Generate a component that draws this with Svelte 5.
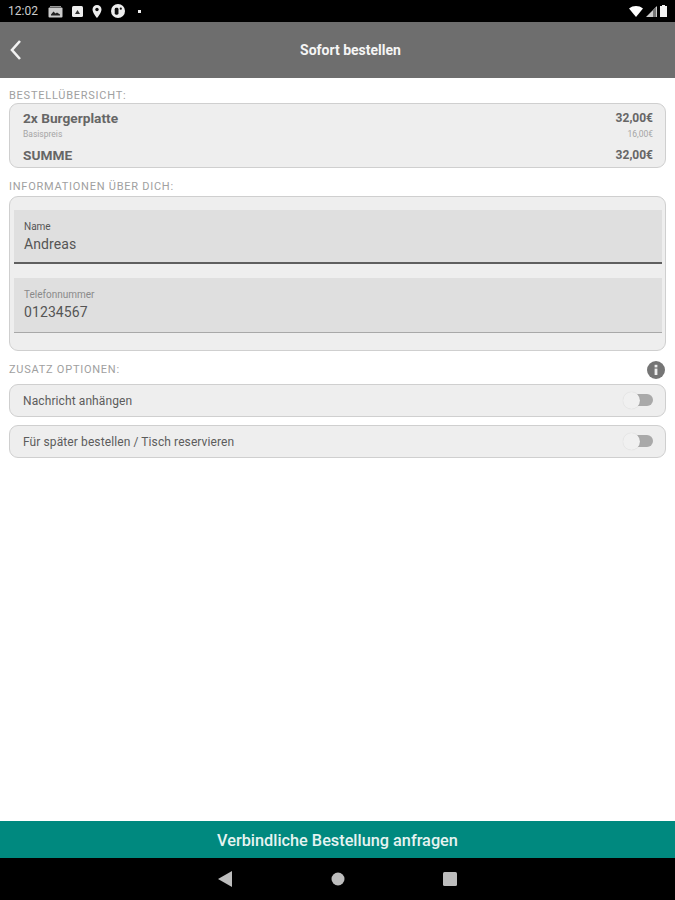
<script>
	const lines = [
		{ name: '2x Burgerplatte', price: '32,00€', cls: 'item' },
		{ name: 'Basispreis', price: '16,00€', cls: 'sub' },
		{ name: 'SUMME', price: '32,00€', cls: 'sum' }
	];
	const options = ['Nachricht anhängen', 'Für später bestellen / Tisch reservieren'];
</script>

<div class="page">
	<div class="statusbar">
		<span class="time">12:02</span>
		<div class="status-left">
			<svg width="15" height="13" viewBox="0 0 15 13"><path d="M2 1h11v1H2z" fill="#999" /><rect x="0.500" y="2.500" width="14" height="10" rx="1" fill="#ccc" /><path d="M3 9.500l2.500-3 2 2 1.500-1 3 2v1H3z" fill="#222" /></svg>
			<svg width="11" height="11" viewBox="0 0 11 11"><rect width="11" height="11" rx="1.500" fill="#eee" /><path d="M3 8l2.500-4L8 8z" fill="#333" /></svg>
			<svg width="10" height="13" viewBox="0 0 10 13"><path d="M5 0a4.500 4.500 0 0 0-4.500 4.500C.5 8 5 13 5 13s4.500-5 4.500-8.500A4.500 4.500 0 0 0 5 0z" fill="#eee" /><circle cx="5" cy="4.500" r="1.700" fill="#111" /></svg>
			<svg width="14" height="14" viewBox="0 0 15 15"><circle cx="7.500" cy="7.500" r="7.500" fill="#eee" /><rect x="4" y="4" width="4" height="7.500" rx="1.500" fill="#111" /><circle cx="10.500" cy="5" r="1.200" fill="#111" /></svg>
			<span class="dot"></span>
		</div>
		<div class="status-right">
			<svg width="14" height="11" viewBox="0 0 14 11"><path d="M0 2.500C4-.8 10-.8 14 2.500L7 11z" fill="#fff" /></svg>
			<svg width="11" height="11" viewBox="0 0 11 11"><path d="M11 0v11H0z" fill="#ccc" /><path d="M7 4v7h3V1z" fill="#777" /></svg>
			<svg width="7" height="12" viewBox="0 0 7 12"><path d="M2 1V0h3v1h2v11H0V1z" fill="#f2f2f2" /></svg>
		</div>
	</div>

	<header class="appbar">
		<svg class="back" width="13" height="22" viewBox="0 0 13 22"><path d="M11 2L3 11l8 9" fill="none" stroke="#f2f2f2" stroke-width="2.600" /></svg>
		<h1>Sofort bestellen</h1>
	</header>

	<main class="content">
		<div class="section-label first">BESTELLÜBERSICHT:</div>
		<section class="card summary">
			{#each lines as line}
				<div class="line {line.cls}">
					<span>{line.name}</span>
					<span>{line.price}</span>
				</div>
			{/each}
		</section>

		<div class="section-label">INFORMATIONEN ÜBER DICH:</div>
		<section class="card form">
			<div class="field active">
				<span class="field-label">Name</span>
				<span class="field-value">Andreas</span>
			</div>
			<div class="field">
				<span class="field-label muted">Telefonnummer</span>
				<span class="field-value">01234567</span>
			</div>
		</section>

		<div class="section-label with-icon">
			<span>ZUSATZ OPTIONEN:</span>
			<svg class="info" width="18" height="18" viewBox="0 0 18 18"><circle cx="9" cy="9" r="9" fill="#757575" /><rect x="7.600" y="3.800" width="2.800" height="2.600" fill="#eee" /><rect x="7.600" y="7.600" width="2.800" height="6.400" fill="#eee" /></svg>
		</div>
		{#each options as option}
			<div class="card option">
				<span>{option}</span>
				<div class="switch"><span class="track"></span><span class="thumb"></span></div>
			</div>
		{/each}
	</main>

	<button class="submit">Verbindliche Bestellung anfragen</button>

	<nav class="navbar">
		<svg width="14" height="16" viewBox="0 0 14 16"><path d="M14 0v16L0 8z" fill="#bdbdbd" /></svg>
		<svg width="14" height="14" viewBox="0 0 14 14"><circle cx="7" cy="7" r="6.500" fill="#bdbdbd" /></svg>
		<svg width="14" height="14" viewBox="0 0 14 14"><rect width="14" height="14" rx="1.500" fill="#bdbdbd" /></svg>
	</nav>
</div>

<style>
	:global(body) {
		margin: 0;
		background: #fff;
	}

	.page {
		width: 675px;
		height: 900px;
		display: flex;
		flex-direction: column;
		font-family: Roboto, 'Liberation Sans', sans-serif;
		overflow: hidden;
	}

	.statusbar {
		height: 22px;
		flex: none;
		background: #000;
		color: #ccc;
		display: flex;
		align-items: center;
		padding: 0 8px;
		box-sizing: border-box;
	}

	.time {
		font-size: 12px;
		width: 40px;
	}

	.status-left {
		display: flex;
		align-items: center;
		gap: 9px;
	}

	.dot {
		width: 3px;
		height: 3px;
		background: #eee;
		margin-left: 4px;
	}

	.status-right {
		margin-left: auto;
		display: flex;
		align-items: center;
		gap: 3px;
		margin-right: 0;
	}

	.appbar {
		position: relative;
		height: 56px;
		flex: none;
		background: #6e6e6e;
		display: flex;
		align-items: center;
		justify-content: center;
		padding-left: 26px;
	}

	.back {
		position: absolute;
		left: 9px;
		top: 17px;
	}

	.appbar h1 {
		margin: 0;
		color: #f5f5f5;
		font-size: 14px;
		font-weight: 700;
	}

	.content {
		flex: 1;
		padding: 0 9px;
		display: flex;
		flex-direction: column;
	}

	.section-label {
		font-size: 11px;
		line-height: 13px;
		letter-spacing: 0.75px;
		color: #a0a0a0;
		margin-top: 12px;
		margin-bottom: 3px;
	}

	.section-label.first {
		margin-top: 11px;
		margin-bottom: 1px;
	}

	.with-icon {
		display: flex;
		justify-content: space-between;
		align-items: center;
		height: 13px;
		margin-top: 12px;
		margin-bottom: 8px;
	}

	.info {
		margin-right: 1px;
	}

	.card {
		box-sizing: border-box;
		background: #eeeeee;
		border: 1px solid #cfcfcf;
		border-radius: 9px;
	}

	.summary {
		height: 65px;
		padding: 6px 12px 0 13px;
	}

	.line {
		display: flex;
		justify-content: space-between;
		color: #666;
		font-weight: 500;
	}

	.item {
		font-size: 13.700px;
		line-height: 16px;
		font-weight: 700;
	}

	.item span:last-child,
	.sum span:last-child {
		font-size: 12px;
	}

	.sub {
		font-size: 8.500px;
		line-height: 12px;
		margin-top: 2px;
		color: #a5a5a5;
		font-weight: 400;
	}

	.sum {
		font-size: 13.700px;
		line-height: 16px;
		font-weight: 700;
		margin-top: 7px;
	}

	.form {
		height: 155px;
		padding: 13px 3px 0 4px;
		display: flex;
		flex-direction: column;
		gap: 14px;
	}

	.field {
		height: 55px;
		box-sizing: border-box;
		background: #dfdfdf;
		border-bottom: 1px solid #a8a8a8;
		padding: 11px 10px 0;
		display: flex;
		flex-direction: column;
	}

	.field.active {
		height: 54px;
		border-bottom: 2px solid #5f5f5f;
	}

	.field-label {
		font-size: 10px;
		line-height: 12px;
		color: #555;
	}

	.field-label.muted {
		color: #8a8a8a;
	}

	.field-value {
		font-size: 14px;
		line-height: 16px;
		margin-top: 3px;
		letter-spacing: 0.1px;
		color: #555;
	}

	.option {
		height: 33px;
		margin-bottom: 8px;
		padding: 0 12px 0 13px;
		display: flex;
		align-items: center;
		justify-content: space-between;
		font-size: 12px;
		letter-spacing: 0.1px;
		color: #5c5c5c;
	}

	.switch {
		position: relative;
		width: 30px;
		height: 17px;
	}

	.track {
		position: absolute;
		left: 4px;
		right: 0;
		top: 2px;
		height: 12px;
		border-radius: 6px;
		background: #a9a9a9;
	}

	.thumb {
		position: absolute;
		left: 0;
		top: 0;
		width: 17px;
		height: 17px;
		border-radius: 50%;
		background: #f0f0f0;
		box-shadow: 0 0 1px rgba(0, 0, 0, 0.15);
	}

	.submit {
		height: 37px;
		flex: none;
		border: none;
		background: #00897f;
		color: #e6f3f1;
		font-family: inherit;
		font-size: 16.300px;
		font-weight: 500;
		padding: 2px 0 0;
	}

	.navbar {
		height: 42px;
		flex: none;
		background: #000;
		display: flex;
		align-items: center;
		padding: 0 218px;
		justify-content: space-between;
		box-sizing: border-box;
	}
</style>
